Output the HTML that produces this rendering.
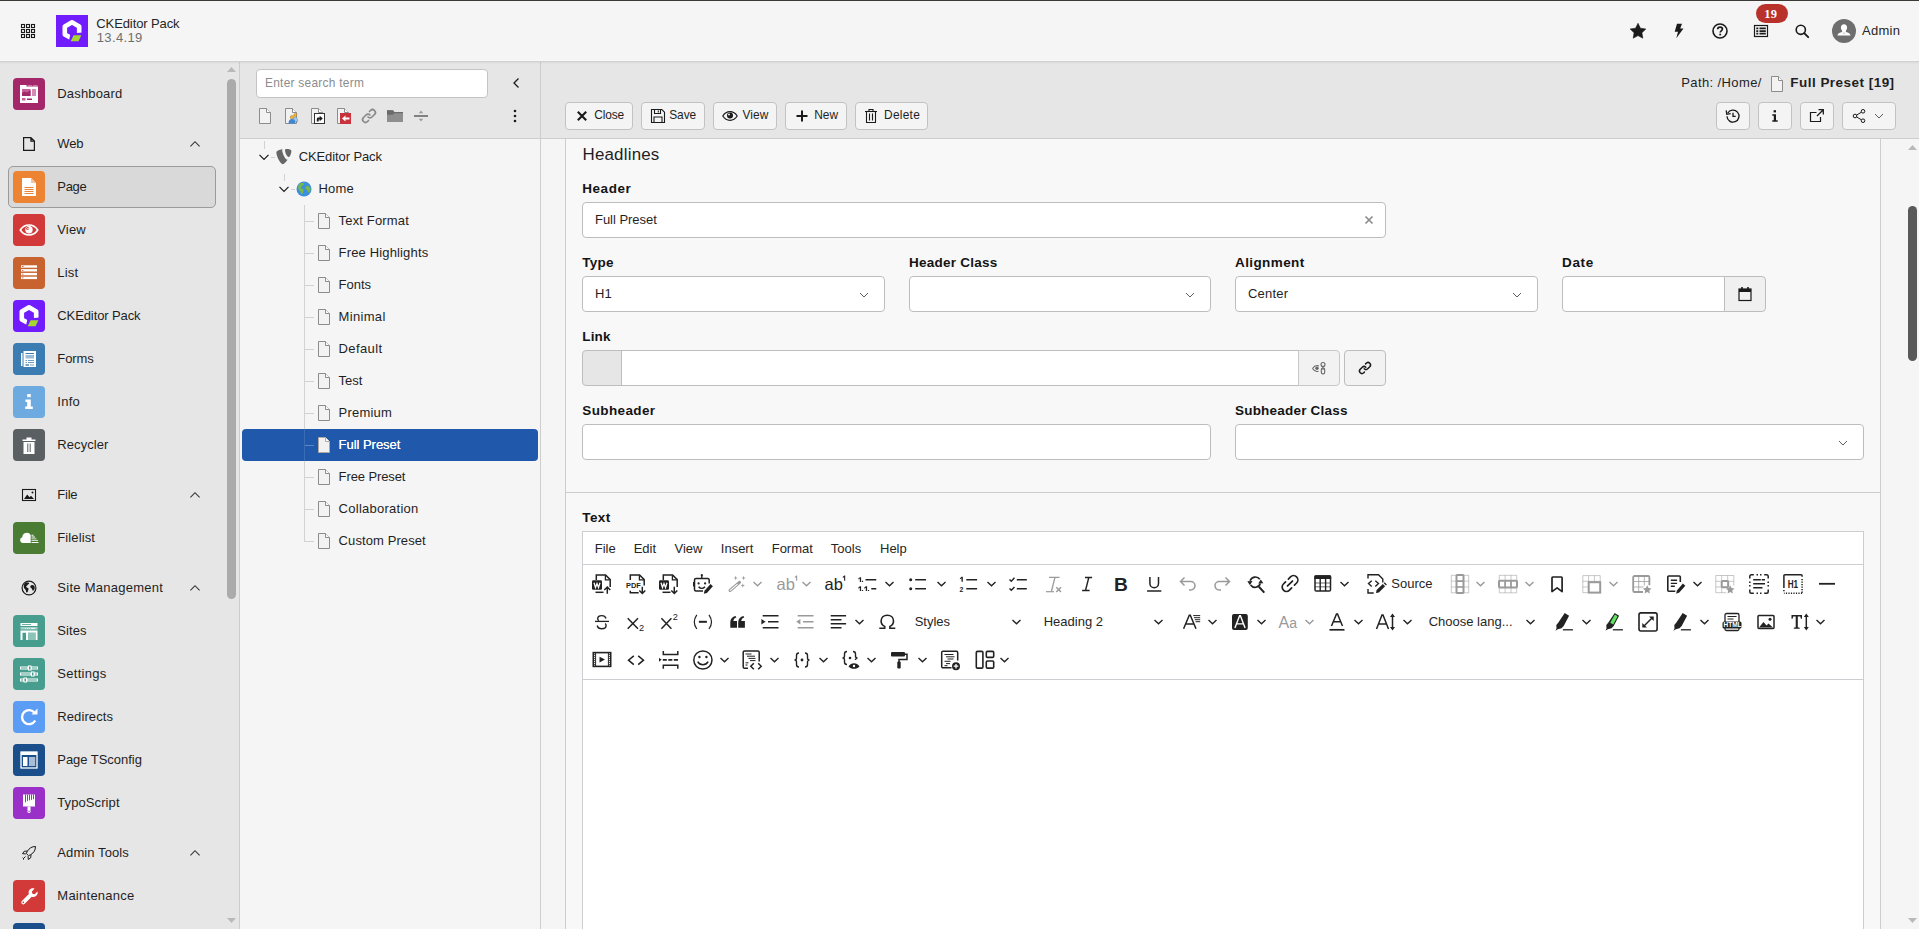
<!DOCTYPE html>
<html lang="en"><head><meta charset="utf-8"><title>Edit Page Content "Full Preset" - TYPO3 CMS</title><style>html,body{margin:0;padding:0}body{width:1919px;height:929px;overflow:hidden;position:relative;background:#f5f5f5;font-family:"Liberation Sans",sans-serif;-webkit-font-smoothing:antialiased}.b{position:absolute;box-sizing:border-box;display:block;overflow:visible}.t{position:absolute;white-space:nowrap;line-height:1;display:block}</style></head>
<body>
<div class="b" style="left:0px;top:0px;width:1919px;height:1px;background:#3b3a36"></div>
<div class="b" style="left:0px;top:1px;width:1919px;height:60px;background:#f5f5f5"></div>
<div class="b" style="left:0px;top:61px;width:1919px;height:868px;background:#f5f5f5"></div>
<div class="b" style="left:0px;top:60px;width:1919px;height:1px;background:#f8f8f8"></div>
<div class="b" style="left:0px;top:61px;width:1919px;height:1px;background:#d0d0d0"></div>
<div class="b" style="left:0px;top:62px;width:239px;height:867px;background:#e6e6e6"></div>
<div class="b" style="left:239px;top:62px;width:1px;height:867px;background:#cdcdcd"></div>
<div class="b" style="left:240px;top:62px;width:300px;height:76px;background:#e6e6e6"></div>
<div class="b" style="left:240px;top:138px;width:300px;height:1px;background:#cdcdcd"></div>
<div class="b" style="left:240px;top:139px;width:300px;height:790px;background:#f5f5f5"></div>
<div class="b" style="left:540px;top:62px;width:1px;height:867px;background:#cdcdcd"></div>
<div class="b" style="left:541px;top:62px;width:1378px;height:76px;background:#e6e6e6"></div>
<div class="b" style="left:541px;top:138px;width:1378px;height:1px;background:#cdcdcd"></div>
<div class="b" style="left:0px;top:62px;width:1919px;height:1px;background:rgba(0,0,0,.035)"></div>
<div class="b" style="left:0px;top:63px;width:1919px;height:1px;background:rgba(0,0,0,.015)"></div>
<div class="b" style="left:565px;top:139px;width:1316px;height:790px;background:#f8f8f8;border-left:1px solid #cdcdcd;border-right:1px solid #cdcdcd"></div>
<svg class="b" style="left:20px;top:23px;" width="16" height="16" viewBox="0 0 16 16"><rect x="1.5" y="1.5" width="3" height="3" fill="none" stroke="#1a1a1a" stroke-width="1.1"/><rect x="1.5" y="6.5" width="3" height="3" fill="none" stroke="#1a1a1a" stroke-width="1.1"/><rect x="1.5" y="11.5" width="3" height="3" fill="none" stroke="#1a1a1a" stroke-width="1.1"/><rect x="6.5" y="1.5" width="3" height="3" fill="none" stroke="#1a1a1a" stroke-width="1.1"/><rect x="6.5" y="6.5" width="3" height="3" fill="none" stroke="#1a1a1a" stroke-width="1.1"/><rect x="6.5" y="11.5" width="3" height="3" fill="none" stroke="#1a1a1a" stroke-width="1.1"/><rect x="11.5" y="1.5" width="3" height="3" fill="none" stroke="#1a1a1a" stroke-width="1.1"/><rect x="11.5" y="6.5" width="3" height="3" fill="none" stroke="#1a1a1a" stroke-width="1.1"/><rect x="11.5" y="11.5" width="3" height="3" fill="none" stroke="#1a1a1a" stroke-width="1.1"/></svg>
<svg class="b" style="left:56px;top:15px;" width="32" height="32" viewBox="0 0 32 32"><rect width="32" height="32" fill="#701cff"/><path d="M16 7.200l7.200 4.200v8l-7.200 4.200-7.200-4.200v-8z" fill="none" stroke="#fff" stroke-width="4.600" stroke-linejoin="round"/><path d="M27 17.500l-12.500 1-2 9.500h14.500z" fill="#701cff"/><path d="M17.600 20.300h7.800l-2.900 5.900h-7.800z" fill="#a5d72e"/></svg>
<span class="t" style="left:96.30px;top:16.80px;font-size:13.00px;letter-spacing:-0.104px;color:#262626;">CKEditor Pack</span>
<span class="t" style="left:96.80px;top:30.90px;font-size:13.00px;letter-spacing:0.347px;color:#6f6f6f;">13.4.19</span>
<svg class="b" style="left:1630px;top:23px;" width="16" height="16" viewBox="0 0 16 16"><path d="M8 .3l2.400 4.900 5.400.800-3.900 3.800.900 5.400-4.800-2.600-4.800 2.600.900-5.400-3.900-3.800 5.400-.800z" fill="#1a1a1a" stroke="#1a1a1a" stroke-width=".6" stroke-linejoin="round"/></svg>
<svg class="b" style="left:1671px;top:23px;" width="16" height="16" viewBox="0 0 16 16"><path d="M6 .8h5l-1.800 4.600h3.300l-7.200 9.800 1.700-6.400h-3.300z" fill="#1a1a1a"/></svg>
<svg class="b" style="left:1712px;top:23px;" width="16" height="16" viewBox="0 0 16 16"><circle cx="8" cy="8" r="7" fill="none" stroke="#1a1a1a" stroke-width="1.600"/><path d="M5.700 6.300c0-1.400 1-2.200 2.400-2.200s2.300.800 2.300 2c0 1.800-2.200 1.700-2.200 3.500" fill="none" stroke="#1a1a1a" stroke-width="1.700"/><rect x="7.300" y="10.700" width="1.800" height="1.700" fill="#1a1a1a"/></svg>
<svg class="b" style="left:1753px;top:23px;" width="16" height="16" viewBox="0 0 16 16"><rect x="1.500" y="2.500" width="13" height="11" fill="none" stroke="#1a1a1a" stroke-width="1.200"/><path d="M3.300 4.600h2v1.700h-2zM3.300 7.200h2v1.700h-2zM3.300 9.800h2v1.700h-2zM6.500 4.600h6.300v1.700h-6.300zM6.500 7.200h6.300v1.700h-6.300zM6.500 9.800h6.300v1.700h-6.300z" fill="#1a1a1a"/></svg>
<svg class="b" style="left:1794px;top:23px;" width="16" height="16" viewBox="0 0 16 16"><circle cx="6.800" cy="6.800" r="4.600" fill="none" stroke="#1a1a1a" stroke-width="1.6"/><path d="M10.200 10.200l4 4" stroke="#1a1a1a" stroke-width="1.900" stroke-linecap="round"/></svg>
<div class="b" style="left:1756px;top:4px;width:32px;height:19px;background:#b9312b;border-radius:10px"></div>
<span class="t" style="left:1764.3px;top:7.6px;font-size:12.5px;font-weight:700;color:#fff;font-family:'Liberation Serif',serif;letter-spacing:.2px">19</span>
<svg class="b" style="left:1832px;top:19px;" width="24" height="24" viewBox="0 0 24 24"><circle cx="12" cy="12" r="12" fill="#6e6e6e"/><path d="M12 5.200c1.900 0 3.100 1.400 3.100 3.300 0 1.300-.5 2.500-1.200 3.200v1.300c2.600.7 4.400 1.500 4.700 3.400h-13.200c.3-1.900 2.100-2.700 4.700-3.400v-1.300c-.7-.7-1.200-1.900-1.200-3.200 0-1.900 1.200-3.300 3.100-3.300z" fill="#fff"/><path d="M10.100 13.600l1.900 2.400 1.900-2.400" fill="#d9d9d9"/></svg>
<span class="t" style="left:1862.00px;top:24.00px;font-size:13.00px;letter-spacing:0.279px;color:#262626;">Admin</span>
<div class="b" style="left:8px;top:166px;width:208px;height:42px;background:#d9d9d9;border:1px solid #9b9b9b;border-radius:5px"></div>
<svg class="b" style="left:13px;top:78px;" width="32" height="32" viewBox="0 0 32 32"><rect width="32" height="32" rx="4" fill="#a4276a"/><path d="M7 7h6.500v1.500h11.500v16.500h-18z" fill="#fff"/><path d="M14.500 7.200h4.500v.9h-4.500zM20 7.200h4.500v.9h-4.500z" fill="#d993b8"/><path d="M9 11h8.500v7h-8.500z" fill="#c65f97"/><path d="M9 15l2.500-1.500 2.500 1 3.500-2.500v6h-8.500z" fill="#a4276a"/><path d="M19 11h4v7h-4z" fill="#d38bb3"/><path d="M9 20h3.500v2.500h-3.500z" fill="#c65f97"/><path d="M14 20.500h5v1.500h-5z" fill="#a4276a"/></svg>
<span class="t" style="left:57.30px;top:87.00px;font-size:13.00px;letter-spacing:0.167px;color:#1f1f1f;">Dashboard</span>
<svg class="b" style="left:21px;top:136px;" width="16" height="16" viewBox="0 0 16 16"><path d="M2.600 1.600h7.300l3.500 3.500v9.300h-10.800zM9.900 1.600v3.500h3.500" fill="none" stroke="#1a1a1a" stroke-width="1.200"/></svg>
<svg class="b" style="left:187px;top:136px;" width="16" height="16" viewBox="0 0 16 16"><path d="M3.400 10.300l4.600-4.600 4.600 4.600" fill="none" stroke="#333" stroke-width="1.100"/></svg>
<span class="t" style="left:57.30px;top:137.00px;font-size:13.00px;letter-spacing:-0.111px;color:#1f1f1f;">Web</span>
<svg class="b" style="left:13px;top:171px;" width="32" height="32" viewBox="0 0 32 32"><rect width="32" height="32" rx="4" fill="#ed8433"/><path d="M9 7h9l5 5v13h-14z" fill="#fff"/><path d="M18 7l5 5h-5z" fill="#f6c29b"/><path d="M11.500 16h9v1h-9zM11.500 18h9v1h-9zM11.500 20h9v1h-9zM11.500 22h9v1h-9z" fill="#ed8433"/></svg>
<span class="t" style="left:57.30px;top:180.00px;font-size:13.00px;letter-spacing:-0.328px;color:#1f1f1f;">Page</span>
<svg class="b" style="left:13px;top:214px;" width="32" height="32" viewBox="0 0 32 32"><rect width="32" height="32" rx="4" fill="#d13a38"/><path d="M7.300 16c2.100-3.300 5-5 8.700-5s6.600 1.700 8.700 5c-2.100 3.300-5 5-8.700 5s-6.600-1.700-8.700-5z" fill="none" stroke="#fff" stroke-width="1.700"/><circle cx="16" cy="15.700" r="3.700" fill="#fff"/><circle cx="14.600" cy="14.400" r="1.500" fill="#d13a38"/><circle cx="15" cy="14.700" r=".800" fill="#fff"/></svg>
<span class="t" style="left:57.30px;top:223.00px;font-size:13.00px;letter-spacing:0.134px;color:#1f1f1f;">View</span>
<svg class="b" style="left:13px;top:257px;" width="32" height="32" viewBox="0 0 32 32"><rect width="32" height="32" rx="4" fill="#c8622f"/><path d="M8 8.3h16v2.400h-16z" fill="#fff"/><path d="M9 9.1h1.500v.8h-1.500z" fill="#c8622f"/><path d="M8 12.1h16v2.400h-16z" fill="#fff"/><path d="M9 12.9h1.500v.8h-1.500z" fill="#c8622f"/><path d="M8 15.9h16v2.400h-16z" fill="#fff"/><path d="M9 16.7h1.500v.8h-1.500z" fill="#c8622f"/><path d="M8 19.7h16v2.400h-16z" fill="#fff"/><path d="M9 20.5h1.500v.8h-1.500z" fill="#c8622f"/></svg>
<span class="t" style="left:57.30px;top:266.00px;font-size:13.00px;letter-spacing:0.187px;color:#1f1f1f;">List</span>
<svg class="b" style="left:13px;top:300px;" width="32" height="32" viewBox="0 0 32 32"><rect width="32" height="32" rx="4" fill="#701cff"/><path d="M16 7.200l7.200 4.200v8l-7.200 4.200-7.200-4.200v-8z" fill="none" stroke="#fff" stroke-width="4.600" stroke-linejoin="round"/><path d="M27 17.500l-12.500 1-2 9.500h14.500z" fill="#701cff"/><path d="M17.600 20.300h7.800l-2.900 5.900h-7.800z" fill="#a5d72e"/></svg>
<span class="t" style="left:57.30px;top:309.00px;font-size:13.00px;letter-spacing:-0.104px;color:#1f1f1f;">CKEditor Pack</span>
<svg class="b" style="left:13px;top:343px;" width="32" height="32" viewBox="0 0 32 32"><rect width="32" height="32" rx="4" fill="#3b7db3"/><path d="M8 10h1.500v13h-1.500z" fill="#fff"/><path d="M10.500 8h12.500v16h-12.500z" fill="#fff"/><path d="M12.500 10h8.500v1h-8.500z" fill="#3b7db3"/><path d="M12.500 12h8.500v3.500h-8.500z" fill="#9bbdd8"/><path d="M12.500 17h1.500v1h-1.500zM15 17h6v1h-6zM12.500 19h1.500v1h-1.500zM15 19h6v1h-6z" fill="#6f9fc7"/><path d="M12.500 21.300h3.500v1.400h-3.500z" fill="#3b7db3"/><path d="M17 21.300h4v1.400h-4z" fill="#9bbdd8"/></svg>
<span class="t" style="left:57.30px;top:352.00px;font-size:13.00px;letter-spacing:-0.070px;color:#1f1f1f;">Forms</span>
<svg class="b" style="left:13px;top:386px;" width="32" height="32" viewBox="0 0 32 32"><rect width="32" height="32" rx="4" fill="#6daae0"/><rect x="14.200" y="8" width="3.600" height="3.200" fill="#fff"/><path d="M12.500 13.500h5.300v7h2v2.500h-7.600v-2.500h2v-4.500h-1.700z" fill="#fff"/></svg>
<span class="t" style="left:57.30px;top:395.00px;font-size:13.00px;letter-spacing:0.257px;color:#1f1f1f;">Info</span>
<svg class="b" style="left:13px;top:429px;" width="32" height="32" viewBox="0 0 32 32"><rect width="32" height="32" rx="4" fill="#5a5f62"/><path d="M9.500 10.500h13v1.500h-13zM13.500 8.500h5v2h-5z" fill="#fff"/><path d="M10.500 13h11v12h-11z" fill="#fff"/><path d="M14.300 14.500h1v8.500h-1zM16.700 14.500h1v8.500h-1z" fill="#5a5f62"/></svg>
<span class="t" style="left:57.30px;top:438.00px;font-size:13.00px;letter-spacing:0.070px;color:#1f1f1f;">Recycler</span>
<svg class="b" style="left:21px;top:487px;" width="16" height="16" viewBox="0 0 16 16"><rect x="1.500" y="2.500" width="13" height="11" fill="none" stroke="#1a1a1a" stroke-width="1.100"/><path d="M3 12l3.200-4.500 2.300 2.800 1.500-1.500 3 3.200z" fill="#1a1a1a"/><circle cx="11.500" cy="5.500" r="1" fill="#1a1a1a"/></svg>
<svg class="b" style="left:187px;top:487px;" width="16" height="16" viewBox="0 0 16 16"><path d="M3.400 10.300l4.600-4.600 4.600 4.600" fill="none" stroke="#333" stroke-width="1.100"/></svg>
<span class="t" style="left:57.30px;top:488.00px;font-size:13.00px;letter-spacing:-0.217px;color:#1f1f1f;">File</span>
<svg class="b" style="left:13px;top:522px;" width="32" height="32" viewBox="0 0 32 32"><rect width="32" height="32" rx="4" fill="#4a7c34"/><path d="M9.700 21a2.900 2.900 0 0 1-.4-5.700 4.500 4.500 0 0 1 8.400-2.300v8z" fill="#fff"/><path d="M18.500 12.800h2v.9h-2zM18.500 14.600h3.500v.9h-3.500zM18.500 16.400h5v.9h-5zM18.500 18.200h6.500v.9h-6.500zM18.500 20h7v.9h-7z" fill="#fff"/></svg>
<span class="t" style="left:57.30px;top:531.00px;font-size:13.00px;letter-spacing:0.109px;color:#1f1f1f;">Filelist</span>
<svg class="b" style="left:21px;top:580px;" width="16" height="16" viewBox="0 0 16 16"><circle cx="8" cy="8" r="6.900" fill="none" stroke="#1a1a1a" stroke-width="1.200"/><path d="M4.500 2.700c1.200-.5 2.400-.2 3.300.1.800.3.300 1.200-.400 1.400-.800.200-.700.900-1.300 1.200-.700.400-1.100 1.100-.700 1.800.4.700 1.500.4 2 1.100.4.600-.1 1.400-.300 2.300-.200 1-.500 2-1.300 1.900-.8-.1-.8-1.300-1-2.300-.200-.900-1.100-1.100-1.600-2-.400-.900-.700-2-.300-3 .2-.900.800-2 1.600-2.500zM10.300 5.200c.7-.4 2-.3 2.600.3.600.6 1.100 1.900.8 2.900-.300 1.100-1 2.300-1.800 2.200-.8-.1-.500-1.300-1-1.900-.5-.600-1.500-.800-1.600-1.700-.1-.700.400-1.400 1-1.800z" fill="#1a1a1a"/></svg>
<svg class="b" style="left:187px;top:580px;" width="16" height="16" viewBox="0 0 16 16"><path d="M3.400 10.300l4.600-4.600 4.600 4.600" fill="none" stroke="#333" stroke-width="1.100"/></svg>
<span class="t" style="left:57.30px;top:581.00px;font-size:13.00px;letter-spacing:0.267px;color:#1f1f1f;">Site Management</span>
<svg class="b" style="left:13px;top:615px;" width="32" height="32" viewBox="0 0 32 32"><rect width="32" height="32" rx="4" fill="#479e8f"/><path d="M7.500 8h17v3h-17z" fill="#fff"/><path d="M9 9h9v.8h-9z" fill="#479e8f"/><path d="M7.500 12h17v2.600h-17z" fill="#a3cfc7"/><path d="M12 13h1v.8h-1zM14 13h1v.8h-1zM16 13h1v.8h-1zM18 13h4v.8h-4z" fill="#fff"/><path d="M7.500 15.500h17v2.300h-17zM7.500 15.500h2v9.500h-2zM22.500 15.500h2v9.500h-2zM13 15.500h2v9.500h-2z" fill="#fff"/><path d="M15 17.800h7.500v7.200h-7.500z" fill="#8cc4ba"/></svg>
<span class="t" style="left:57.30px;top:624.00px;font-size:13.00px;letter-spacing:0.078px;color:#1f1f1f;">Sites</span>
<svg class="b" style="left:13px;top:658px;" width="32" height="32" viewBox="0 0 32 32"><rect width="32" height="32" rx="4" fill="#479e8f"/><g fill="none" stroke="#fff" stroke-width="1"><rect x="7.500" y="9" width="7.500" height="2"/><rect x="18.500" y="9" width="6" height="2"/><rect x="15.500" y="8" width="2.500" height="4"/><rect x="7.500" y="15" width="10.500" height="2"/><rect x="21.500" y="15" width="3" height="2"/><rect x="18.500" y="14" width="2.500" height="4"/><rect x="7.500" y="21" width="3" height="2"/><rect x="14" y="21" width="10.500" height="2"/><rect x="11" y="20" width="2.500" height="4"/></g></svg>
<span class="t" style="left:57.30px;top:667.00px;font-size:13.00px;letter-spacing:0.281px;color:#1f1f1f;">Settings</span>
<svg class="b" style="left:13px;top:701px;" width="32" height="32" viewBox="0 0 32 32"><rect width="32" height="32" rx="4" fill="#5b9cf5"/><path d="M22.200 19.500a7 7 0 1 1-.5-7.500" fill="none" stroke="#fff" stroke-width="2.400"/><path d="M18.500 13.500h6v-6z" fill="#fff"/></svg>
<span class="t" style="left:57.30px;top:710.00px;font-size:13.00px;letter-spacing:0.093px;color:#1f1f1f;">Redirects</span>
<svg class="b" style="left:13px;top:744px;" width="32" height="32" viewBox="0 0 32 32"><rect width="32" height="32" rx="4" fill="#1a4f8b"/><rect x="8" y="8" width="16" height="16" fill="none" stroke="#fff" stroke-width="1.300"/><path d="M8 8h16v3h-16z" fill="#fff"/><path d="M10 13h4.500v9h-4.500z" fill="#fff"/><path d="M16 13h6.200v9h-6.200z" fill="#a9bed6"/></svg>
<span class="t" style="left:57.30px;top:753.00px;font-size:13.00px;letter-spacing:-0.039px;color:#1f1f1f;">Page TSconfig</span>
<svg class="b" style="left:13px;top:787px;" width="32" height="32" viewBox="0 0 32 32"><rect width="32" height="32" rx="4" fill="#9b30c9"/><path d="M10 7.500h12v12h-12z" fill="#fff"/><path d="M12 7.500h1v7l-1 1.500zM14 7.500h1v6l-1 1zM16 7.500h1v5.500l-1 .8zM18 7.500h1v5l-1 .7zM20 7.500h1v4.500l-1 .6z" fill="#9b30c9"/><path d="M14.500 19.500h3v4h-3z" fill="#fff"/><circle cx="16" cy="24.500" r="1.600" fill="#fff"/><circle cx="16" cy="24.500" r=".7" fill="#9b30c9"/></svg>
<span class="t" style="left:57.30px;top:796.00px;font-size:13.00px;letter-spacing:0.091px;color:#1f1f1f;">TypoScript</span>
<svg class="b" style="left:21px;top:845px;" width="16" height="16" viewBox="0 0 16 16"><g fill="none" stroke="#1a1a1a" stroke-width="1"><path d="M14.500 1.500c-3.500 0-6.200 1.500-8.200 4.800l-1 2.200 2.200 2.200 2.200-1c3.300-2 4.800-4.700 4.800-8.200z"/><path d="M6.500 6l-3.300.3-1.700 2.400 3.300.2M10 9.500l-.3 3.300-2.400 1.700-.2-3.300"/><path d="M4.500 11.500l-2.500 2.500"/></g><path d="M1.500 12.500l1 1M2.800 14.800l-.8-.8" stroke="#1a1a1a" stroke-width=".8"/></svg>
<svg class="b" style="left:187px;top:845px;" width="16" height="16" viewBox="0 0 16 16"><path d="M3.400 10.300l4.600-4.600 4.600 4.600" fill="none" stroke="#333" stroke-width="1.100"/></svg>
<span class="t" style="left:57.30px;top:846.00px;font-size:13.00px;letter-spacing:0.095px;color:#1f1f1f;">Admin Tools</span>
<svg class="b" style="left:13px;top:880px;" width="32" height="32" viewBox="0 0 32 32"><rect width="32" height="32" rx="4" fill="#d13a38"/><path d="M24.500 11.500l-2.800 2.800-2.300-.6-.600-2.300 2.800-2.800c-2-.7-4.100-.1-5.200 1.400-.9 1.200-1 2.700-.5 4l-7 7c-.8.800-.8 2 0 2.800.800.800 2 .8 2.800 0l7-7c1.300.5 2.800.4 4-.5 1.500-1.100 2.400-2.900 1.800-4.800z" fill="#fff"/><circle cx="10.300" cy="22.300" r=".9" fill="#d13a38"/></svg>
<span class="t" style="left:57.30px;top:889.00px;font-size:13.00px;letter-spacing:0.258px;color:#1f1f1f;">Maintenance</span>
<svg class="b" style="left:13px;top:923px;" width="32" height="32" viewBox="0 0 32 32"><rect width="32" height="32" rx="4" fill="#1a4f8b"/></svg>
<div class="b" style="left:227px;top:79px;width:9px;height:520px;background:#ababab;border-radius:5px"></div>
<svg class="b" style="left:227px;top:67px;" width="9" height="5" viewBox="0 0 9 5"><path d="M0 5l4.500-5 4.500 5z" fill="#b9b9b9"/></svg>
<svg class="b" style="left:227px;top:918px;" width="9" height="5" viewBox="0 0 9 5"><path d="M0 0l4.500 5 4.500-5z" fill="#b9b9b9"/></svg>
<div class="b" style="left:256px;top:69px;width:232px;height:29px;background:#fff;border:1px solid #c4c4c4;border-radius:4px"></div>
<span class="t" style="left:265.00px;top:78.01px;font-size:11.92px;letter-spacing:0.263px;color:#8c8c8c;">Enter search term</span>
<svg class="b" style="left:508px;top:75px;" width="16" height="16" viewBox="0 0 16 16"><path d="M10.500 3.500l-4.500 4.500 4.500 4.500" fill="none" stroke="#1a1a1a" stroke-width="1.300"/></svg>
<svg class="b" style="left:257px;top:108px;" width="16" height="16" viewBox="0 0 16 16"><path d="M2.500 .5h7l4 4v11h-11z" fill="#f2f2f2" stroke="#8c8c8c" stroke-width="1"/><path d="M9.500 .5v4h4" fill="#fff" stroke="#8c8c8c" stroke-width="1"/></svg>
<svg class="b" style="left:283px;top:108px;" width="16" height="16" viewBox="0 0 16 16"><path d="M2.500 .5h7l4 4v11h-11z" fill="#f2f2f2" stroke="#8c8c8c" stroke-width="1"/><path d="M9.500 .5v4h4" fill="#fff" stroke="#8c8c8c" stroke-width="1"/><circle cx="12.300" cy="7" r="1.600" fill="#f5b335" stroke="#8a6a20" stroke-width=".4"/><path d="M9.800 13.500c0-2.700 1-4.300 2.500-4.300s2.500 1.600 2.500 4.300z" fill="#9cc7ee" stroke="#5a7fa3" stroke-width=".4"/><circle cx="9" cy="9.200" r="1.800" fill="#f5b335" stroke="#8a6a20" stroke-width=".4"/><path d="M5.500 15.500c0-2.900 1.400-4.400 3.500-4.400s3.500 1.500 3.500 4.400z" fill="#3f86d6"/></svg>
<svg class="b" style="left:309px;top:108px;" width="16" height="16" viewBox="0 0 16 16"><path d="M2.500 .5h7l4 4v11h-11z" fill="#f2f2f2" stroke="#8c8c8c" stroke-width="1"/><path d="M9.500 .5v4h4" fill="#fff" stroke="#8c8c8c" stroke-width="1"/><rect x="5.500" y="5.500" width="10" height="10" fill="#fff" stroke="#333" stroke-width="1"/><path d="M7.800 13.500v-2.300c0-1 .700-1.600 1.600-1.600h1.300v-1.800l3.100 2.700-3.100 2.700v-1.800h-1v2.100z" fill="#1a1a1a"/></svg>
<svg class="b" style="left:335px;top:108px;" width="16" height="16" viewBox="0 0 16 16"><path d="M2.500 .5h7l4 4v11h-11z" fill="#f2f2f2" stroke="#8c8c8c" stroke-width="1"/><path d="M9.500 .5v4h4" fill="#fff" stroke="#8c8c8c" stroke-width="1"/><rect x="5" y="5" width="11" height="11" fill="#c8323c"/><path d="M7 10.500l3.500-3v2h4v2h-4v2z" fill="#fff"/></svg>
<svg class="b" style="left:361px;top:108px;" width="16" height="16" viewBox="0 0 16 16"><g fill="none" stroke="#8a8a8a" stroke-width="1.700" stroke-linecap="round"><path d="M7 9a2.800 2.800 0 0 0 4 0l2.500-2.500a2.800 2.800 0 0 0-4-4l-1 1"/><path d="M9 7a2.800 2.800 0 0 0-4 0l-2.500 2.500a2.800 2.800 0 0 0 4 4l1-1"/></g></svg>
<svg class="b" style="left:387px;top:108px;" width="16" height="16" viewBox="0 0 16 16"><path d="M0 2.300h6l1.300 1.700h8.700v10h-16z" fill="#8e8e8e"/><path d="M0 2.300h6l1.300 1.700h8.700v1.200h-8.800l-1.200 1.500h-6z" fill="#6b6b6b"/></svg>
<svg class="b" style="left:413px;top:108px;" width="16" height="16" viewBox="0 0 16 16"><path d="M1 7.300h14v1.400h-14z" fill="#555"/><path d="M8 2.500l2.200 2.800h-4.400zM8 13.500l2.200-2.800h-4.400z" fill="#9a9a9a"/></svg>
<svg class="b" style="left:507px;top:108px;" width="16" height="16" viewBox="0 0 16 16"><circle cx="8" cy="3" r="1.300" fill="#1a1a1a"/><circle cx="8" cy="8" r="1.300" fill="#1a1a1a"/><circle cx="8" cy="13" r="1.300" fill="#1a1a1a"/></svg>
<div class="b" style="left:264px;top:141px;width:1px;height:8px;background:#d2d2d2"></div>
<div class="b" style="left:271px;top:157px;width:4px;height:1px;background:#d2d2d2"></div>
<div class="b" style="left:284px;top:174px;width:1px;height:7px;background:#d2d2d2"></div>
<div class="b" style="left:291px;top:189px;width:4px;height:1px;background:#d2d2d2"></div>
<div class="b" style="left:304px;top:205px;width:1px;height:337px;background:#d2d2d2"></div>
<div class="b" style="left:242px;top:429px;width:296px;height:32px;background:#2059ab;border-radius:4px"></div>
<div class="b" style="left:304px;top:429px;width:1px;height:32px;background:#3a6cb5"></div>
<svg class="b" style="left:256px;top:149px;" width="16" height="16" viewBox="0 0 16 16"><path d="M3.500 5.800l4.500 4.500 4.500-4.500" fill="none" stroke="#1a1a1a" stroke-width="1.200"/></svg>
<svg class="b" style="left:276px;top:149px;" width="16" height="16" viewBox="0 0 16 16"><g transform="translate(-.6 -.6) scale(1.080)"><path d="M11.400 10.300c-.2.100-.400.100-.600.100-1.800 0-4.500-6.300-4.500-8.400 0-.8.200-1 .400-1.300-2.100.3-4.700 1.100-5.500 2.100-.2.200-.300.600-.300 1.100 0 3.300 3.500 10.700 6 10.700 1.100 0 3-1.900 4.500-4.300z" fill="#666"/><path d="M10.300.600c2.300 0 4.500.4 4.500 1.700 0 2.600-1.700 5.800-2.500 5.800-1.500 0-3.400-4.200-3.400-6.300 0-1 .4-1.200 1.400-1.200z" fill="#666"/></g></svg>
<span class="t" style="left:298.70px;top:150.30px;font-size:13.00px;letter-spacing:-0.104px;color:#1f1f1f;">CKEditor Pack</span>
<svg class="b" style="left:276px;top:181px;" width="16" height="16" viewBox="0 0 16 16"><path d="M3.500 5.800l4.500 4.500 4.500-4.500" fill="none" stroke="#1a1a1a" stroke-width="1.200"/></svg>
<svg class="b" style="left:296px;top:181px;" width="16" height="16" viewBox="0 0 16 16"><circle cx="8" cy="8" r="7.500" fill="#3b8ee0"/><path d="M4.200 2.300c1.200-.6 2.800-.3 3.800 0 .9.300.3 1.300-.5 1.500-.900.200-.800 1-1.500 1.400-.800.400-1.300 1.200-.800 2 .500.800 1.700.500 2.300 1.300.500.700-.100 1.600-.300 2.600-.200 1.100-.600 2.300-1.500 2.200-.900-.100-.900-1.500-1.100-2.600-.200-1-1.300-1.300-1.800-2.300-.500-1-.800-2.300-.400-3.400.300-1 .900-2.200 1.800-2.700zM10.500 5.300c.8-.5 2.300-.4 3 .3.700.7 1.200 2.100.900 3.300-.3 1.200-1.100 2.600-2 2.500-.9-.1-.6-1.500-1.200-2.200-.600-.700-1.700-.900-1.800-1.900-.1-.800.400-1.600 1.100-2z" fill="#79b943"/></svg>
<span class="t" style="left:318.40px;top:182.30px;font-size:13.00px;letter-spacing:0.190px;color:#1f1f1f;">Home</span>
<div class="b" style="left:305px;top:221px;width:9px;height:1px;background:#d2d2d2"></div>
<svg class="b" style="left:316px;top:213px;" width="16" height="16" viewBox="0 0 16 16"><path d="M2.500 .5h7l4 4v11h-11z" fill="#f2f2f2" stroke="#8c8c8c" stroke-width="1"/><path d="M9.500 .5v4h4" fill="#fff" stroke="#8c8c8c" stroke-width="1"/></svg>
<span class="t" style="left:338.60px;top:214.30px;font-size:13.00px;letter-spacing:0.159px;color:#1f1f1f;">Text Format</span>
<div class="b" style="left:305px;top:253px;width:9px;height:1px;background:#d2d2d2"></div>
<svg class="b" style="left:316px;top:245px;" width="16" height="16" viewBox="0 0 16 16"><path d="M2.500 .5h7l4 4v11h-11z" fill="#f2f2f2" stroke="#8c8c8c" stroke-width="1"/><path d="M9.500 .5v4h4" fill="#fff" stroke="#8c8c8c" stroke-width="1"/></svg>
<span class="t" style="left:338.60px;top:246.30px;font-size:13.00px;letter-spacing:0.152px;color:#1f1f1f;">Free Highlights</span>
<div class="b" style="left:305px;top:285px;width:9px;height:1px;background:#d2d2d2"></div>
<svg class="b" style="left:316px;top:277px;" width="16" height="16" viewBox="0 0 16 16"><path d="M2.500 .5h7l4 4v11h-11z" fill="#f2f2f2" stroke="#8c8c8c" stroke-width="1"/><path d="M9.500 .5v4h4" fill="#fff" stroke="#8c8c8c" stroke-width="1"/></svg>
<span class="t" style="left:338.60px;top:278.30px;font-size:13.00px;letter-spacing:-0.027px;color:#1f1f1f;">Fonts</span>
<div class="b" style="left:305px;top:317px;width:9px;height:1px;background:#d2d2d2"></div>
<svg class="b" style="left:316px;top:309px;" width="16" height="16" viewBox="0 0 16 16"><path d="M2.500 .5h7l4 4v11h-11z" fill="#f2f2f2" stroke="#8c8c8c" stroke-width="1"/><path d="M9.500 .5v4h4" fill="#fff" stroke="#8c8c8c" stroke-width="1"/></svg>
<span class="t" style="left:338.60px;top:310.30px;font-size:13.00px;letter-spacing:0.317px;color:#1f1f1f;">Minimal</span>
<div class="b" style="left:305px;top:349px;width:9px;height:1px;background:#d2d2d2"></div>
<svg class="b" style="left:316px;top:341px;" width="16" height="16" viewBox="0 0 16 16"><path d="M2.500 .5h7l4 4v11h-11z" fill="#f2f2f2" stroke="#8c8c8c" stroke-width="1"/><path d="M9.500 .5v4h4" fill="#fff" stroke="#8c8c8c" stroke-width="1"/></svg>
<span class="t" style="left:338.60px;top:342.30px;font-size:13.00px;letter-spacing:0.379px;color:#1f1f1f;">Default</span>
<div class="b" style="left:305px;top:381px;width:9px;height:1px;background:#d2d2d2"></div>
<svg class="b" style="left:316px;top:373px;" width="16" height="16" viewBox="0 0 16 16"><path d="M2.500 .5h7l4 4v11h-11z" fill="#f2f2f2" stroke="#8c8c8c" stroke-width="1"/><path d="M9.500 .5v4h4" fill="#fff" stroke="#8c8c8c" stroke-width="1"/></svg>
<span class="t" style="left:338.60px;top:374.30px;font-size:13.00px;letter-spacing:-0.053px;color:#1f1f1f;">Test</span>
<div class="b" style="left:305px;top:413px;width:9px;height:1px;background:#d2d2d2"></div>
<svg class="b" style="left:316px;top:405px;" width="16" height="16" viewBox="0 0 16 16"><path d="M2.500 .5h7l4 4v11h-11z" fill="#f2f2f2" stroke="#8c8c8c" stroke-width="1"/><path d="M9.500 .5v4h4" fill="#fff" stroke="#8c8c8c" stroke-width="1"/></svg>
<span class="t" style="left:338.60px;top:406.30px;font-size:13.00px;letter-spacing:0.199px;color:#1f1f1f;">Premium</span>
<div class="b" style="left:305px;top:445px;width:9px;height:1px;background:#5d86c2"></div>
<svg class="b" style="left:316px;top:437px;" width="16" height="16" viewBox="0 0 16 16"><path d="M2.500 .5h7l4 4v11h-11z" fill="#f2f2f2" stroke="#b0a9a0" stroke-width="1"/><path d="M9.500 .5v4h4" fill="#fff" stroke="#b0a9a0" stroke-width="1"/></svg>
<span class="t" style="left:338.60px;top:438.30px;font-size:13.00px;letter-spacing:-0.034px;color:#fff;text-shadow:0 0 .6px #fff;">Full Preset</span>
<div class="b" style="left:305px;top:477px;width:9px;height:1px;background:#d2d2d2"></div>
<svg class="b" style="left:316px;top:469px;" width="16" height="16" viewBox="0 0 16 16"><path d="M2.500 .5h7l4 4v11h-11z" fill="#f2f2f2" stroke="#8c8c8c" stroke-width="1"/><path d="M9.500 .5v4h4" fill="#fff" stroke="#8c8c8c" stroke-width="1"/></svg>
<span class="t" style="left:338.60px;top:470.30px;font-size:13.00px;letter-spacing:-0.111px;color:#1f1f1f;">Free Preset</span>
<div class="b" style="left:305px;top:509px;width:9px;height:1px;background:#d2d2d2"></div>
<svg class="b" style="left:316px;top:501px;" width="16" height="16" viewBox="0 0 16 16"><path d="M2.500 .5h7l4 4v11h-11z" fill="#f2f2f2" stroke="#8c8c8c" stroke-width="1"/><path d="M9.500 .5v4h4" fill="#fff" stroke="#8c8c8c" stroke-width="1"/></svg>
<span class="t" style="left:338.60px;top:502.30px;font-size:13.00px;letter-spacing:0.259px;color:#1f1f1f;">Collaboration</span>
<div class="b" style="left:305px;top:541px;width:9px;height:1px;background:#d2d2d2"></div>
<svg class="b" style="left:316px;top:533px;" width="16" height="16" viewBox="0 0 16 16"><path d="M2.500 .5h7l4 4v11h-11z" fill="#f2f2f2" stroke="#8c8c8c" stroke-width="1"/><path d="M9.500 .5v4h4" fill="#fff" stroke="#8c8c8c" stroke-width="1"/></svg>
<span class="t" style="left:338.60px;top:534.30px;font-size:13.00px;letter-spacing:0.095px;color:#1f1f1f;">Custom Preset</span>
<div class="b" style="left:565px;top:102px;width:68px;height:28px;background:#f4f4f4;border:1px solid #c2c2c2;border-radius:4px"></div>
<svg class="b" style="left:574px;top:108px;" width="16" height="16" viewBox="0 0 16 16"><path d="M3.800 3.800l8.400 8.400M12.200 3.800l-8.400 8.400" stroke="#1a1a1a" stroke-width="2.100"/></svg>
<span class="t" style="left:594.20px;top:109.71px;font-size:11.92px;letter-spacing:-0.100px;color:#1f1f1f;">Close</span>
<div class="b" style="left:641px;top:102px;width:64px;height:28px;background:#f4f4f4;border:1px solid #c2c2c2;border-radius:4px"></div>
<svg class="b" style="left:650px;top:108px;" width="16" height="16" viewBox="0 0 16 16"><path d="M1.500 1.500h10.300l2.700 2.700v10.300h-13z" fill="none" stroke="#1a1a1a" stroke-width="1.100"/><path d="M4.500 1.500v4h6v-4M8.300 2.500v2" fill="none" stroke="#1a1a1a" stroke-width="1.100"/><path d="M4 14.500v-5.500h8v5.500" fill="none" stroke="#1a1a1a" stroke-width="1.100"/></svg>
<span class="t" style="left:669.20px;top:109.71px;font-size:11.92px;letter-spacing:-0.040px;color:#1f1f1f;">Save</span>
<div class="b" style="left:713px;top:102px;width:64px;height:28px;background:#f4f4f4;border:1px solid #c2c2c2;border-radius:4px"></div>
<svg class="b" style="left:722px;top:108px;" width="16" height="16" viewBox="0 0 16 16"><path d="M.8 8c1.800-2.900 4.300-4.300 7.200-4.300s5.400 1.400 7.200 4.300c-1.800 2.900-4.300 4.300-7.200 4.300s-5.400-1.400-7.200-4.300z" fill="none" stroke="#1a1a1a" stroke-width="1.200"/><circle cx="8" cy="7.600" r="3" fill="#1a1a1a"/><circle cx="7" cy="6.500" r="1" fill="#eee"/></svg>
<span class="t" style="left:742.50px;top:109.71px;font-size:11.92px;letter-spacing:0.122px;color:#1f1f1f;">View</span>
<div class="b" style="left:785px;top:102px;width:62px;height:28px;background:#f4f4f4;border:1px solid #c2c2c2;border-radius:4px"></div>
<svg class="b" style="left:794px;top:108px;" width="16" height="16" viewBox="0 0 16 16"><path d="M8 2.500v11M2.500 8h11" stroke="#1a1a1a" stroke-width="2"/></svg>
<span class="t" style="left:814.20px;top:109.71px;font-size:11.92px;letter-spacing:0.051px;color:#1f1f1f;">New</span>
<div class="b" style="left:855px;top:102px;width:73px;height:28px;background:#f4f4f4;border:1px solid #c2c2c2;border-radius:4px"></div>
<svg class="b" style="left:863px;top:108px;" width="16" height="16" viewBox="0 0 16 16"><path d="M2 3.500h12" stroke="#1a1a1a" stroke-width="1.100"/><path d="M6 3.300v-1.800h4v1.800" fill="none" stroke="#1a1a1a" stroke-width="1.100"/><path d="M3.500 3.500v11h9v-11" fill="none" stroke="#1a1a1a" stroke-width="1.100"/><path d="M6.500 5.500v7M9.500 5.500v7" stroke="#1a1a1a" stroke-width="1.100"/></svg>
<span class="t" style="left:884.00px;top:109.71px;font-size:11.92px;letter-spacing:0.283px;color:#1f1f1f;">Delete</span>
<div class="b" style="left:1716px;top:102px;width:34px;height:28px;background:#f4f4f4;border:1px solid #c2c2c2;border-radius:4px"></div>
<div class="b" style="left:1758px;top:102px;width:34px;height:28px;background:#f4f4f4;border:1px solid #c2c2c2;border-radius:4px"></div>
<div class="b" style="left:1800px;top:102px;width:34px;height:28px;background:#f4f4f4;border:1px solid #c2c2c2;border-radius:4px"></div>
<div class="b" style="left:1842px;top:102px;width:54px;height:28px;background:#f4f4f4;border:1px solid #c2c2c2;border-radius:4px"></div>
<svg class="b" style="left:1725px;top:108px;" width="16" height="16" viewBox="0 0 16 16"><path d="M2.700 5.300a6 6 0 1 1-.7 2.900" fill="none" stroke="#1a1a1a" stroke-width="1.300"/><path d="M1.200 2.400l.6 3.900 3.900-.6" fill="none" stroke="#1a1a1a" stroke-width="1.300"/><path d="M8 4.800v3.500h2.700" fill="none" stroke="#1a1a1a" stroke-width="1.300"/></svg>
<svg class="b" style="left:1767px;top:108px;" width="16" height="16" viewBox="0 0 16 16"><rect x="6.600" y="2.200" width="2.400" height="2.200" fill="#1a1a1a"/><path d="M5.300 6.300h3.700v6h1.700v1.500h-5.400v-1.500h1.500v-4.500h-1.500z" fill="#1a1a1a"/></svg>
<svg class="b" style="left:1809px;top:108px;" width="16" height="16" viewBox="0 0 16 16"><path d="M11.500 9v4.500h-10v-9h6" fill="none" stroke="#1a1a1a" stroke-width="1.200"/><path d="M9.500 1.700h4.800v4.800M14.300 1.700l-6.300 6.300" fill="none" stroke="#1a1a1a" stroke-width="1.300"/></svg>
<svg class="b" style="left:1851px;top:108px;" width="16" height="16" viewBox="0 0 16 16"><circle cx="12" cy="3.300" r="1.800" fill="none" stroke="#1a1a1a" stroke-width="1"/><circle cx="4" cy="8" r="1.800" fill="none" stroke="#1a1a1a" stroke-width="1"/><circle cx="12" cy="12.700" r="1.800" fill="none" stroke="#1a1a1a" stroke-width="1"/><path d="M5.600 7.100l4.800-2.900M5.600 8.900l4.800 2.900" stroke="#1a1a1a" stroke-width="1"/></svg>
<svg class="b" style="left:1871px;top:108px;" width="16" height="16" viewBox="0 0 16 16"><path d="M4 6l4 4 4-4" fill="none" stroke="#5e5e5e" stroke-width="1"/></svg>
<span class="t" style="left:1681.30px;top:76.00px;font-size:13.00px;letter-spacing:0.386px;color:#1f1f1f;">Path: /Home/</span>
<svg class="b" style="left:1769px;top:76px;" width="16" height="16" viewBox="0 0 16 16"><path d="M2.500 .5h7l4 4v11h-11z" fill="#f2f2f2" stroke="#8c8c8c" stroke-width="1"/><path d="M9.500 .5v4h4" fill="#fff" stroke="#8c8c8c" stroke-width="1"/></svg>
<span class="t" style="left:1790.30px;top:75.57px;font-size:13.50px;letter-spacing:0.468px;color:#1f1f1f;font-weight:700;">Full Preset [19]</span>
<span class="t" style="left:582.50px;top:146.69px;font-size:16.90px;letter-spacing:0.212px;color:#1f1f1f;">Headlines</span>
<span class="t" style="left:582.30px;top:181.57px;font-size:13.50px;letter-spacing:0.525px;color:#141414;font-weight:700;">Header</span>
<div class="b" style="left:582px;top:202px;width:804px;height:36px;background:#fff;border:1px solid #bdbdbd;border-radius:4px"></div>
<span class="t" style="left:595.00px;top:213.00px;font-size:13.00px;letter-spacing:-0.034px;color:#1f1f1f;">Full Preset</span>
<svg class="b" style="left:1361px;top:212px;" width="16" height="16" viewBox="0 0 16 16"><path d="M4.500 4.500l7 7M11.500 4.500l-7 7" stroke="#8c8c8c" stroke-width="1.700"/></svg>
<span class="t" style="left:582.30px;top:256.07px;font-size:13.50px;letter-spacing:0.201px;color:#141414;font-weight:700;">Type</span>
<span class="t" style="left:909.00px;top:256.07px;font-size:13.50px;letter-spacing:0.238px;color:#141414;font-weight:700;">Header Class</span>
<span class="t" style="left:1235.00px;top:256.07px;font-size:13.50px;letter-spacing:0.397px;color:#141414;font-weight:700;">Alignment</span>
<span class="t" style="left:1562.00px;top:256.07px;font-size:13.50px;letter-spacing:0.668px;color:#141414;font-weight:700;">Date</span>
<div class="b" style="left:582px;top:276px;width:303px;height:36px;background:#fff;border:1px solid #bdbdbd;border-radius:4px"></div>
<span class="t" style="left:595.00px;top:287.00px;font-size:13.00px;letter-spacing:0.020px;color:#1f1f1f;">H1</span>
<svg class="b" style="left:856px;top:286.5px;" width="16" height="16" viewBox="0 0 16 16"><path d="M4 6l4 4 4-4" fill="none" stroke="#5e5e5e" stroke-width="1"/></svg>
<div class="b" style="left:909px;top:276px;width:302px;height:36px;background:#fff;border:1px solid #bdbdbd;border-radius:4px"></div>
<svg class="b" style="left:1182px;top:286.5px;" width="16" height="16" viewBox="0 0 16 16"><path d="M4 6l4 4 4-4" fill="none" stroke="#5e5e5e" stroke-width="1"/></svg>
<div class="b" style="left:1235px;top:276px;width:303px;height:36px;background:#fff;border:1px solid #bdbdbd;border-radius:4px"></div>
<span class="t" style="left:1248.00px;top:287.00px;font-size:13.00px;letter-spacing:0.228px;color:#1f1f1f;">Center</span>
<svg class="b" style="left:1509px;top:286.5px;" width="16" height="16" viewBox="0 0 16 16"><path d="M4 6l4 4 4-4" fill="none" stroke="#5e5e5e" stroke-width="1"/></svg>
<div class="b" style="left:1562px;top:276px;width:163px;height:36px;background:#fff;border:1px solid #bdbdbd;border-radius:4px;border-radius:4px 0 0 4px"></div>
<div class="b" style="left:1724px;top:276px;width:42px;height:36px;background:#f0f0f0;border:1px solid #bdbdbd;border-radius:0 4px 4px 0"></div>
<svg class="b" style="left:1737px;top:286px;" width="16" height="16" viewBox="0 0 16 16"><rect x="2" y="3" width="12" height="11.500" fill="none" stroke="#1a1a1a" stroke-width="1.200"/><path d="M2 3h12v3h-12z" fill="#1a1a1a"/><path d="M5 1v3M11 1v3" stroke="#1a1a1a" stroke-width="1.600"/></svg>
<span class="t" style="left:582.30px;top:329.87px;font-size:13.50px;letter-spacing:0.133px;color:#141414;font-weight:700;">Link</span>
<div class="b" style="left:582px;top:350px;width:40px;height:36px;background:#e6e6e6;border:1px solid #bdbdbd;border-radius:4px 0 0 4px"></div>
<div class="b" style="left:621px;top:350px;width:678px;height:36px;background:#fff;border:1px solid #bdbdbd"></div>
<div class="b" style="left:1298px;top:350px;width:42px;height:36px;background:#f2f2f2;border:1px solid #c8c8c8;border-radius:0 4px 4px 0"></div>
<svg class="b" style="left:1311px;top:360px;" width="16" height="16" viewBox="0 0 16 16"><g fill="none" stroke="#666" stroke-width="1.100"><path d="M1.500 8.500c1.300-2 2.900-3 4.500-3 .7 0 1.400.2 2 .5M1.500 8.500c1.300 2 2.900 3 4.500 3 .5 0 1-.1 1.500-.3"/><circle cx="12" cy="4.500" r="2"/><rect x="10.300" y="8" width="3.400" height="6" rx="1.700"/><path d="M12 6.500v3.500"/></g><circle cx="6" cy="8.300" r="1.700" fill="#666"/></svg>
<div class="b" style="left:1344px;top:350px;width:42px;height:36px;background:#f2f2f2;border:1px solid #bdbdbd;border-radius:4px"></div>
<svg class="b" style="left:1357px;top:360px;" width="16" height="16" viewBox="0 0 16 16"><g fill="none" stroke="#1a1a1a" stroke-width="1.500" stroke-linecap="round"><path d="M7.200 8.800a2.500 2.500 0 0 0 3.500 0l2.300-2.300a2.500 2.500 0 0 0-3.500-3.500l-.9.900"/><path d="M8.800 7.200a2.500 2.500 0 0 0-3.500 0l-2.300 2.300a2.500 2.500 0 0 0 3.500 3.500l.9-.9"/></g></svg>
<span class="t" style="left:582.30px;top:403.87px;font-size:13.50px;letter-spacing:0.382px;color:#141414;font-weight:700;">Subheader</span>
<span class="t" style="left:1235.00px;top:403.87px;font-size:13.50px;letter-spacing:0.209px;color:#141414;font-weight:700;">Subheader Class</span>
<div class="b" style="left:582px;top:424px;width:629px;height:36px;background:#fff;border:1px solid #bdbdbd;border-radius:4px"></div>
<div class="b" style="left:1235px;top:424px;width:629px;height:36px;background:#fff;border:1px solid #bdbdbd;border-radius:4px"></div>
<svg class="b" style="left:1835px;top:434.5px;" width="16" height="16" viewBox="0 0 16 16"><path d="M4 6l4 4 4-4" fill="none" stroke="#5e5e5e" stroke-width="1"/></svg>
<div class="b" style="left:566px;top:492px;width:1314px;height:1px;background:#cdcdcd"></div>
<span class="t" style="left:582.30px;top:510.57px;font-size:13.50px;letter-spacing:0.363px;color:#141414;font-weight:700;">Text</span>
<div class="b" style="left:582px;top:531px;width:1282px;height:420px;background:#fff;border:1px solid #ccced1"></div>
<div class="b" style="left:583px;top:564px;width:1280px;height:1px;background:#ccced1"></div>
<div class="b" style="left:583px;top:679px;width:1280px;height:1px;background:#ccced1"></div>
<span class="t" style="left:594.70px;top:541.70px;font-size:13.00px;color:#262626;">File</span>
<span class="t" style="left:633.70px;top:541.70px;font-size:13.00px;color:#262626;">Edit</span>
<span class="t" style="left:674.50px;top:541.70px;font-size:13.00px;color:#262626;">View</span>
<span class="t" style="left:720.80px;top:541.70px;font-size:13.00px;color:#262626;">Insert</span>
<span class="t" style="left:771.70px;top:541.70px;font-size:13.00px;color:#262626;">Format</span>
<span class="t" style="left:830.80px;top:541.70px;font-size:13.00px;color:#262626;">Tools</span>
<span class="t" style="left:880.00px;top:541.70px;font-size:13.00px;color:#262626;">Help</span>
<svg class="b" style="left:591.7px;top:574px;color:#222;" width="20" height="20" viewBox="0 0 20 20"><path d="M4.300 6v-5h9.300l4.600 4.600v7.400" fill="none" stroke="currentColor" stroke-width="1.500"/><path d="M13.400 1.200v4.600h4.600" fill="none" stroke="currentColor" stroke-width="1.300"/><rect x="0" y="6.300" width="10" height="9.400" rx="1.300" fill="currentColor"/><path d="M2 8.700l1.500 4.800 1.500-3.900 1.500 3.900 1.500-4.800" fill="none" stroke="#fff" stroke-width="1.300"/><path d="M3.500 18.300h8" fill="none" stroke="currentColor" stroke-width="1.500"/><path d="M15.300 19.800v-6.500M12.300 16l3-3 3 3" fill="none" stroke="currentColor" stroke-width="1.500"/></svg>
<svg class="b" style="left:625.8px;top:574px;color:#222;" width="20" height="20" viewBox="0 0 20 20"><path d="M4.300 6v-5h9.300l4.600 4.600v6" fill="none" stroke="currentColor" stroke-width="1.500"/><path d="M13.400 1.200v4.600h4.600" fill="none" stroke="currentColor" stroke-width="1.300"/><text x="0" y="13.900" font-size="7.400" font-weight="700" style="font-family:'Liberation Sans',sans-serif" fill="currentColor">PDF</text><path d="M4.300 16.800v2h8.400" fill="none" stroke="currentColor" stroke-width="1.500"/><path d="M16.300 12.800v6.500M13.300 16.500l3 3 3-3" fill="none" stroke="currentColor" stroke-width="1.500"/></svg>
<svg class="b" style="left:658.7px;top:574px;color:#222;" width="20" height="20" viewBox="0 0 20 20"><path d="M4.300 6v-5h9.300l4.600 4.600v7.400" fill="none" stroke="currentColor" stroke-width="1.500"/><path d="M13.400 1.200v4.600h4.600" fill="none" stroke="currentColor" stroke-width="1.300"/><rect x="0" y="6.300" width="10" height="9.400" rx="1.300" fill="currentColor"/><path d="M2 8.700l1.500 4.800 1.500-3.900 1.500 3.900 1.500-4.800" fill="none" stroke="#fff" stroke-width="1.300"/><path d="M3.500 18.300h8" fill="none" stroke="currentColor" stroke-width="1.500"/><path d="M15.300 12.800v6.500M12.300 16.500l3 3 3-3" fill="none" stroke="currentColor" stroke-width="1.500"/></svg>
<svg class="b" style="left:693px;top:574px;color:#222;" width="20" height="20" viewBox="0 0 20 20"><path d="M8.800 1v3.500" fill="none" stroke="currentColor" stroke-width="1.400"/><circle cx="8.800" cy="1.200" r="1.100" fill="currentColor"/><path d="M16.200 9.500v-3.500a1.500 1.500 0 0 0-1.500-1.500h-11.700a1.500 1.500 0 0 0-1.500 1.500v9.500a1.500 1.500 0 0 0 1.500 1.500h7" fill="none" stroke="currentColor" stroke-width="1.500"/><path d="M.6 8v4.500" fill="none" stroke="currentColor" stroke-width="1.200"/><circle cx="5.600" cy="9.400" r="1.100" fill="currentColor"/><circle cx="12.100" cy="9.400" r="1.100" fill="currentColor"/><path d="M5.600 12.800c.9 1.100 1.900 1.600 3.200 1.600s2.300-.5 3.200-1.600" fill="none" stroke="currentColor" stroke-width="1.400"/><path d="M10.800 19.800l.7-3.100 6-6.700 2.400 2.200-6 6.700z" fill="currentColor"/></svg>
<svg class="b" style="left:727.5px;top:574px;color:#9a9a9a;" width="20" height="20" viewBox="0 0 20 20"><path d="M2 16.500l9.500-8.200" fill="none" stroke="currentColor" stroke-width="3" stroke-linecap="round"/><path d="M2.200 16.300l7-6" stroke="#fff" stroke-width="1.100" stroke-linecap="round"/><path d="M7.700 1.800l.6 1.600 1.600.6-1.600.6-.6 1.600-.6-1.600-1.600-.6 1.600-.6zM15.600 1.800l.6 1.600 1.600.6-1.600.6-.6 1.600-.6-1.600-1.600-.6 1.600-.6zM14.800 9.300l.6 1.600 1.600.6-1.600.6-.6 1.600-.6-1.600-1.600-.6 1.600-.6z" fill="currentColor"/></svg>
<svg class="b" style="left:753px;top:581.2px;color:#9a9a9a;" width="9" height="6" viewBox="0 0 9 6"><path d="M.5 1l4 3.800 4-3.800" fill="none" stroke="currentColor" stroke-width="1.400"/></svg>
<svg class="b" style="left:776.7px;top:574px;color:#9a9a9a;" width="20" height="20" viewBox="0 0 20 20"><text x="-.5" y="16.300" font-size="16.500" style="font-family:'Liberation Sans',sans-serif" fill="currentColor">ab</text><path d="M17.600 3l1.700-1.500h.9v5.200h-1.100v-3.700l-1 .9z" fill="currentColor"/></svg>
<svg class="b" style="left:802px;top:581.2px;color:#9a9a9a;" width="9" height="6" viewBox="0 0 9 6"><path d="M.5 1l4 3.800 4-3.800" fill="none" stroke="currentColor" stroke-width="1.400"/></svg>
<svg class="b" style="left:824.6px;top:574px;color:#222;" width="20" height="20" viewBox="0 0 20 20"><text x="-.5" y="16.300" font-size="16.500" style="font-family:'Liberation Sans',sans-serif" fill="currentColor">ab</text><path d="M17.600 3l1.700-1.500h.9v5.200h-1.100v-3.700l-1 .9z" fill="currentColor"/></svg>
<svg class="b" style="left:856.7px;top:574px;color:#222;" width="20" height="20" viewBox="0 0 20 20"><path d="M1.3 4.5l1.6 -1.3h1.2v4.8h-1.3v-3.4l-1.5 1zM4.9 6.8h1.200v1.200h-1.200zM1.3 13.6l1.6 -1.3h1.2v4.8h-1.3v-3.4l-1.5 1zM4.9 15.9h1.200v1.200h-1.200zM7.3 13.6l1.6 -1.3h1.2v4.8h-1.3v-3.4l-1.5 1zM10.9 15.9h1.200v1.200h-1.200z" fill="currentColor"/><path d="M8.500 5.700h10.800M14.300 14.800h5" fill="none" stroke="currentColor" stroke-width="1.500"/></svg>
<svg class="b" style="left:885.4px;top:581.2px;color:#222;" width="9" height="6" viewBox="0 0 9 6"><path d="M.5 1l4 3.800 4-3.800" fill="none" stroke="currentColor" stroke-width="1.400"/></svg>
<svg class="b" style="left:907px;top:574px;color:#222;" width="20" height="20" viewBox="0 0 20 20"><circle cx="3.700" cy="5.700" r="1.500" fill="currentColor"/><circle cx="3.700" cy="14.800" r="1.500" fill="currentColor"/><path d="M8.200 5.700h10.800M8.200 14.800h10.800" fill="none" stroke="currentColor" stroke-width="1.500"/></svg>
<svg class="b" style="left:937px;top:581.2px;color:#222;" width="9" height="6" viewBox="0 0 9 6"><path d="M.5 1l4 3.800 4-3.800" fill="none" stroke="currentColor" stroke-width="1.400"/></svg>
<svg class="b" style="left:957.7px;top:574px;color:#222;" width="20" height="20" viewBox="0 0 20 20"><path d="M1.9 4.15417l1.66667 -1.35417h1.25v5h-1.35417v-3.54167l-1.5625 1.04167z" fill="currentColor"/><text x="1.500" y="17.800" font-size="6.800" font-weight="700" style="font-family:'Liberation Sans',sans-serif" fill="currentColor">2</text><path d="M8.300 5.700h10.800M8.300 14.800h10.800" fill="none" stroke="currentColor" stroke-width="1.500"/></svg>
<svg class="b" style="left:987px;top:581.2px;color:#222;" width="9" height="6" viewBox="0 0 9 6"><path d="M.5 1l4 3.800 4-3.800" fill="none" stroke="currentColor" stroke-width="1.400"/></svg>
<svg class="b" style="left:1008px;top:574px;color:#222;" width="20" height="20" viewBox="0 0 20 20"><path d="M1.500 5.500l1.800 1.700 3.200-3.400M1.500 14.600l1.800 1.700 3.200-3.400" fill="none" stroke="currentColor" stroke-width="1.400"/><path d="M8.800 5.700h10M8.800 14.800h10" fill="none" stroke="currentColor" stroke-width="1.500"/></svg>
<svg class="b" style="left:1043px;top:574px;color:#9a9a9a;" width="20" height="20" viewBox="0 0 20 20"><path d="M6 3.300h10.500M12 3.300l-3.500 13.700" fill="none" stroke="currentColor" stroke-width="1.300"/><path d="M3 17.700h8" fill="none" stroke="currentColor" stroke-width="1.200"/><path d="M13.300 13.300l4.700 4.700M18 13.300l-4.700 4.700" fill="none" stroke="currentColor" stroke-width="1.500"/></svg>
<svg class="b" style="left:1076.7px;top:574px;color:#222;" width="20" height="20" viewBox="0 0 20 20"><path d="M8 3.500h7.100M5.100 16.500h7.500M11.800 3.500l-3.300 13" fill="none" stroke="currentColor" stroke-width="1.400"/></svg>
<svg class="b" style="left:1110.7px;top:574px;color:#222;" width="20" height="20" viewBox="0 0 20 20"><text x="3.100" y="16.900" font-size="19.200" font-weight="700" style="font-family:'Liberation Sans',sans-serif" fill="currentColor">B</text></svg>
<svg class="b" style="left:1143.7px;top:574px;color:#222;" width="20" height="20" viewBox="0 0 20 20"><path d="M5.900 3v6.500a4.300 4.300 0 0 0 8.600 0v-6.500" fill="none" stroke="currentColor" stroke-width="1.500"/><path d="M3.100 17h14.200" fill="none" stroke="currentColor" stroke-width="1.500"/></svg>
<svg class="b" style="left:1178px;top:574px;color:#9a9a9a;" width="20" height="20" viewBox="0 0 20 20"><path d="M6.500 5l-4 4 4 4M2.800 9h10a4.200 4.200 0 0 1 0 8.400h-1.800" fill="none" stroke="currentColor" stroke-width="1.500" transform="translate(0 -1.500)"/></svg>
<svg class="b" style="left:1212px;top:574px;color:#9a9a9a;" width="20" height="20" viewBox="0 0 20 20"><path d="M13.500 5l4 4-4 4M17.200 9h-10a4.200 4.200 0 0 0 0 8.400h1.800" fill="none" stroke="currentColor" stroke-width="1.500" transform="translate(0 -1.500)"/></svg>
<svg class="b" style="left:1246px;top:574px;color:#222;" width="20" height="20" viewBox="0 0 20 20"><path d="M13.800 5.300a5.500 5.500 0 0 0-9.700 1.500M4.600 11a5.500 5.500 0 0 0 9.700-1.500" fill="none" stroke="currentColor" stroke-width="1.700"/><path d="M12.900 12.700l5.400 5.900" fill="none" stroke="currentColor" stroke-width="2"/><path d="M1.300 7.300l5.200-.3-2.600 4.200z" fill="currentColor"/><path d="M17.400 9.300l-5.200.3 2.600-4.200z" fill="currentColor"/></svg>
<svg class="b" style="left:1280px;top:574px;color:#222;" width="20" height="20" viewBox="0 0 20 20"><g transform="rotate(-45 10 9.500)" fill="none" stroke="currentColor" stroke-width="1.700" stroke-linecap="round"><path d="M8 5.200h-3a4.300 4.300 0 0 0 0 8.600h3M12 5.200h3a4.300 4.300 0 0 1 0 8.600h-3M6.500 9.500h7"/></g></svg>
<svg class="b" style="left:1313px;top:574px;color:#222;" width="20" height="20" viewBox="0 0 20 20"><rect x="2" y="2" width="15.500" height="15" rx="1.300" fill="none" stroke="currentColor" stroke-width="1.500"/><path d="M1.300 2.600a1.300 1.300 0 0 1 1.300-1.300h14.300a1.300 1.300 0 0 1 1.300 1.300v2.300h-16.900z" fill="currentColor"/><path d="M7.200 4.500v12.500M12.600 4.500v12.500" fill="none" stroke="currentColor" stroke-width="1.400"/><path d="M2 9h15.500M2 12.800h15.500" fill="none" stroke="currentColor" stroke-width="1.500" opacity=".45"/></svg>
<svg class="b" style="left:1340px;top:581.2px;color:#222;" width="9" height="6" viewBox="0 0 9 6"><path d="M.5 1l4 3.800 4-3.800" fill="none" stroke="currentColor" stroke-width="1.400"/></svg>
<svg class="b" style="left:1366px;top:574px;color:#222;" width="20" height="20" viewBox="0 0 20 20"><path d="M2 4.500v-3.700h10.500l4.300 4.300v3.500" fill="none" stroke="currentColor" stroke-width="1.400"/><path d="M2 15v4h5.700" fill="none" stroke="currentColor" stroke-width="1.400"/><path d="M5.700 6.700l-3.200 2.900 3.200 2.900M9.300 6.700l3.200 2.900-3.200 2.900" fill="none" stroke="currentColor" stroke-width="1.400"/><path d="M10 19l.6-2.900 6.200-6.200 2.300 2.300-6.200 6.200z" fill="currentColor"/><path d="M17.700 9.200l.9-.9 2.300 2.300-.9.900z" fill="currentColor"/></svg>
<svg class="b" style="left:1450px;top:574px;color:#9a9a9a;" width="20" height="20" viewBox="0 0 20 20"><path d="M1.300 1.300h17.400v17.500h-17.400zM1.300 7.100h17.400M1.300 13h17.400" fill="none" stroke="currentColor" stroke-width="1" opacity=".55"/><rect x="6.500" y="1" width="7" height="18" rx=".8" fill="none" stroke="currentColor" stroke-width="2"/><path d="M6.500 7.100h7M6.500 13h7" fill="none" stroke="currentColor" stroke-width="1.700"/></svg>
<svg class="b" style="left:1476px;top:581.2px;color:#9a9a9a;" width="9" height="6" viewBox="0 0 9 6"><path d="M.5 1l4 3.800 4-3.800" fill="none" stroke="currentColor" stroke-width="1.400"/></svg>
<svg class="b" style="left:1498px;top:574px;color:#9a9a9a;" width="20" height="20" viewBox="0 0 20 20"><path d="M1.300 1.300h17.400v17.500h-17.400zM7.100 1.300v17.500M13 1.300v17.500" fill="none" stroke="currentColor" stroke-width="1" opacity=".55"/><rect x="1" y="6.800" width="18" height="6.600" rx=".8" fill="none" stroke="currentColor" stroke-width="2"/><path d="M7.100 6.800v6.600M13 6.800v6.600" fill="none" stroke="currentColor" stroke-width="1.700"/></svg>
<svg class="b" style="left:1525.4px;top:581.2px;color:#9a9a9a;" width="9" height="6" viewBox="0 0 9 6"><path d="M.5 1l4 3.800 4-3.800" fill="none" stroke="currentColor" stroke-width="1.400"/></svg>
<svg class="b" style="left:1547px;top:574px;color:#222;" width="20" height="20" viewBox="0 0 20 20"><path d="M5 3.800a.8.800 0 0 1 .8-.8h8.500a.8.800 0 0 1 .8.800v13.800l-5-3.700-5.100 3.700z" fill="none" stroke="currentColor" stroke-width="1.700" stroke-linejoin="round"/></svg>
<svg class="b" style="left:1581.6px;top:574px;color:#9a9a9a;" width="20" height="20" viewBox="0 0 20 20"><path d="M.8 1.600h17.400v5.700M.8 1.600v17h5M.8 7.300h17.400M.8 13h5M6.600 1.600v5.700M12.400 1.600v5.700" fill="none" stroke="currentColor" stroke-width="1" opacity=".55"/><rect x="6.700" y="8.200" width="11.500" height="10.400" fill="none" stroke="currentColor" stroke-width="2"/></svg>
<svg class="b" style="left:1609px;top:581.2px;color:#9a9a9a;" width="9" height="6" viewBox="0 0 9 6"><path d="M.5 1l4 3.800 4-3.800" fill="none" stroke="currentColor" stroke-width="1.400"/></svg>
<svg class="b" style="left:1631.5px;top:574px;color:#9a9a9a;" width="20" height="20" viewBox="0 0 20 20"><path d="M11 18h-8.500a1.300 1.300 0 0 1-1.300-1.300v-13.400a1.300 1.300 0 0 1 1.300-1.300h13.600a1.300 1.300 0 0 1 1.300 1.300v8" fill="none" stroke="currentColor" stroke-width="1.800"/><path d="M1.500 7.500h16M1.500 13h10M6.700 2v16M12.300 2v9.500" fill="none" stroke="currentColor" stroke-width="1" opacity=".75"/><path d="M15.200 11.300l1.300 2.700 3 .4-2.200 2.100.5 3-2.600-1.400-2.600 1.400.5-3-2.200-2.100 3-.4z" fill="currentColor"/></svg>
<svg class="b" style="left:1666px;top:574px;color:#222;" width="20" height="20" viewBox="0 0 20 20"><path d="M14.300 8v-5a1 1 0 0 0-1-1h-10.500a1 1 0 0 0-1 1v13.200a1 1 0 0 0 1 1h6.500" fill="none" stroke="currentColor" stroke-width="1.600"/><path d="M4.800 6.300h6.300M4.800 9.400h6.300M4.800 12.300h4" fill="none" stroke="currentColor" stroke-width="1.400"/><path d="M10.200 19.700l.7-3.300 6-6.900 2.400 2.200-6 6.900z" fill="currentColor"/></svg>
<svg class="b" style="left:1693px;top:581.2px;color:#222;" width="9" height="6" viewBox="0 0 9 6"><path d="M.5 1l4 3.800 4-3.800" fill="none" stroke="currentColor" stroke-width="1.400"/></svg>
<svg class="b" style="left:1715px;top:574px;color:#9a9a9a;" width="20" height="20" viewBox="0 0 20 20"><path d="M.8 1.500h18v10M.8 1.500v17.200h10.500M.8 7.300h18M.8 13h10M6.700 1.500v17.200M12.700 1.500v10" fill="none" stroke="currentColor" stroke-width="1" opacity=".55"/><rect x="6.700" y="7" width="6.500" height="6.300" rx="1" fill="none" stroke="currentColor" stroke-width="2"/><path d="M15.200 11.300l1.300 2.700 3 .4-2.200 2.100.5 3-2.600-1.400-2.600 1.400.5-3-2.200-2.100 3-.4z" fill="currentColor"/></svg>
<svg class="b" style="left:1749px;top:574px;color:#222;" width="20" height="20" viewBox="0 0 20 20"><path d="M.8 4.500v-2.200a1.500 1.500 0 0 1 1.500-1.500h2.500M15.200.8h2.500a1.500 1.500 0 0 1 1.500 1.500v2.200M19.200 15.500v2.200a1.500 1.500 0 0 1-1.500 1.500h-2.500M4.800 19.200h-2.500a1.500 1.500 0 0 1-1.500-1.500v-2.200" fill="none" stroke="currentColor" stroke-width="1.500"/><path d="M7.500.8h1.500M11 .8h1.500M7.500 19.200h1.500M11 19.200h1.500M.8 7.500v1.500M.8 11v1.500M19.200 7.500v1.500M19.200 11v1.500" fill="none" stroke="currentColor" stroke-width="1.500"/><path d="M4.200 5.700h7.600M12.700 5.700h3.300M4.200 9.800h11.800M4.200 13.800h9.300" fill="none" stroke="currentColor" stroke-width="1.400"/></svg>
<svg class="b" style="left:1783px;top:574px;color:#222;" width="20" height="20" viewBox="0 0 20 20"><path d="M.9 14v-12.200a1 1 0 0 1 1-1h16.200a1 1 0 0 1 1 1v1" fill="none" stroke="currentColor" stroke-width="1.500"/><path d="M.9 16v1.200M19.100 5v14.200M19.100 19.200h-18.200" fill="none" stroke="currentColor" stroke-width="1.500" stroke-dasharray="1.200 1.300"/><g transform="translate(4.700 13.800) scale(.8 1)"><text x="0" y="0" font-size="10.200" font-weight="700" style="font-family:'Liberation Sans',sans-serif" fill="currentColor">H1</text></g></svg>
<svg class="b" style="left:1817px;top:574px;color:#222;" width="20" height="20" viewBox="0 0 20 20"><path d="M2 9.800h16" fill="none" stroke="currentColor" stroke-width="1.800"/></svg>
<span class="t" style="left:1391.30px;top:577.30px;font-size:13.00px;color:#262626;">Source</span>
<svg class="b" style="left:592px;top:612px;color:#222;" width="20" height="20" viewBox="0 0 20 20"><path d="M14 6.500c-.5-1.900-2-2.900-4.300-2.900-2.400 0-4 1.200-4 3 0 .9.400 1.600 1 2.100M5.200 13.500c.5 2.100 2.100 3.300 4.600 3.300 2.600 0 4.300-1.300 4.300-3.200 0-.9-.3-1.600-.9-2.100" fill="none" stroke="currentColor" stroke-width="1.400"/><path d="M3 9.400h14" fill="none" stroke="currentColor" stroke-width="1.300"/></svg>
<svg class="b" style="left:626px;top:612px;color:#222;" width="20" height="20" viewBox="0 0 20 20"><path d="M1.700 6.300l10.300 10.400M12 6.300l-10.300 10.400" fill="none" stroke="currentColor" stroke-width="1.500"/><text x="13" y="19" font-size="9.200" style="font-family:'Liberation Sans',sans-serif" fill="currentColor">2</text></svg>
<svg class="b" style="left:659.6px;top:612px;color:#222;" width="20" height="20" viewBox="0 0 20 20"><path d="M1.400 6.300l10 10.400M11.400 6.300l-10 10.400" fill="none" stroke="currentColor" stroke-width="1.500"/><text x="12.800" y="7.800" font-size="9.200" style="font-family:'Liberation Sans',sans-serif" fill="currentColor">2</text></svg>
<svg class="b" style="left:693px;top:612px;color:#222;" width="20" height="20" viewBox="0 0 20 20"><path d="M3.800 2.800c-3.300 4.700-3.300 9.500 0 14.200M16 2.800c3.300 4.700 3.300 9.500 0 14.200" fill="none" stroke="currentColor" stroke-width="1.200"/><path d="M5.900 9.800h8" fill="none" stroke="currentColor" stroke-width="2"/></svg>
<svg class="b" style="left:727.5px;top:612px;color:#222;" width="20" height="20" viewBox="0 0 20 20"><path d="M2.300 15.800v-5.300c0-3.500 1.900-5.700 5.400-6.500l.6 1.400c-2 .7-2.900 1.800-2.900 3.600h3.600v6.800zM10.200 15.800v-5.300c0-3.500 1.900-5.700 5.400-6.500l.6 1.400c-2 .7-2.900 1.800-2.900 3.600h3.600v6.800z" fill="currentColor"/></svg>
<svg class="b" style="left:760.4px;top:612px;color:#222;" width="20" height="20" viewBox="0 0 20 20"><path d="M2.700 3.800h15.800M8 9.700h10.500M2.700 15.800h15.800" fill="none" stroke="currentColor" stroke-width="1.500"/><path d="M1.400 7l4.200 2.700-4.200 2.700z" fill="currentColor"/></svg>
<svg class="b" style="left:794.6px;top:612px;color:#9a9a9a;" width="20" height="20" viewBox="0 0 20 20"><path d="M2.700 3.800h15.800M8 9.700h10.500M2.700 15.800h15.800" fill="none" stroke="currentColor" stroke-width="1.500"/><path d="M5.400 7l-4.200 2.700 4.200 2.700z" fill="currentColor"/></svg>
<svg class="b" style="left:827.5px;top:612px;color:#222;" width="20" height="20" viewBox="0 0 20 20"><path d="M2.700 3.800h15.400M2.700 7.700h10.800M2.700 11.700h15.400M2.700 15.800h10.800" fill="none" stroke="currentColor" stroke-width="1.500"/></svg>
<svg class="b" style="left:854.6px;top:619.2px;color:#222;" width="9" height="6" viewBox="0 0 9 6"><path d="M.5 1l4 3.800 4-3.800" fill="none" stroke="currentColor" stroke-width="1.400"/></svg>
<svg class="b" style="left:876.7px;top:612px;color:#222;" width="20" height="20" viewBox="0 0 20 20"><path d="M2.300 16.200h5.400v-1.800c-2.300-1.100-3.600-3-3.600-5.500 0-3.400 2.500-5.700 6.200-5.700s6.200 2.300 6.200 5.700c0 2.500-1.300 4.400-3.600 5.500v1.800h5.400" fill="none" stroke="currentColor" stroke-width="1.600"/></svg>
<svg class="b" style="left:1183px;top:612px;color:#222;" width="20" height="20" viewBox="0 0 20 20"><path d="M.6 16.800l5.700-13.600h1l5.700 13.600M2.700 12h8.200" fill="none" stroke="currentColor" stroke-width="1.500"/><path d="M10.200 3.600h7M11 5.700h6.200M11.800 7.700h5.400M12.600 9.700h4.600" fill="none" stroke="currentColor" stroke-width="1"/></svg>
<svg class="b" style="left:1208px;top:619.2px;color:#222;" width="9" height="6" viewBox="0 0 9 6"><path d="M.5 1l4 3.800 4-3.800" fill="none" stroke="currentColor" stroke-width="1.400"/></svg>
<svg class="b" style="left:1230px;top:612px;color:#222;" width="20" height="20" viewBox="0 0 20 20"><rect x="2" y="1.900" width="15.800" height="16.100" rx="2" fill="currentColor"/><path d="M4.900 16l4.700-12.300h.8l4.700 12.300M6.500 11.900h7" fill="none" stroke="#fff" stroke-width="1.400"/></svg>
<svg class="b" style="left:1257px;top:619.2px;color:#222;" width="9" height="6" viewBox="0 0 9 6"><path d="M.5 1l4 3.800 4-3.800" fill="none" stroke="currentColor" stroke-width="1.400"/></svg>
<svg class="b" style="left:1279px;top:612px;color:#9a9a9a;" width="20" height="20" viewBox="0 0 20 20"><text x="-0.500" y="16" font-size="16" style="font-family:'Liberation Sans',sans-serif" fill="currentColor">A</text><text x="10.300" y="16" font-size="14" style="font-family:'Liberation Sans',sans-serif" fill="currentColor">a</text></svg>
<svg class="b" style="left:1305px;top:619.2px;color:#9a9a9a;" width="9" height="6" viewBox="0 0 9 6"><path d="M.5 1l4 3.800 4-3.800" fill="none" stroke="currentColor" stroke-width="1.400"/></svg>
<svg class="b" style="left:1327px;top:612px;color:#222;" width="20" height="20" viewBox="0 0 20 20"><path d="M4.500 14l5-12h1l5 12M6.500 9.800h7" fill="none" stroke="currentColor" stroke-width="1.500"/><path d="M2.500 17.800h15" fill="none" stroke="currentColor" stroke-width="1.700"/></svg>
<svg class="b" style="left:1354px;top:619.2px;color:#222;" width="9" height="6" viewBox="0 0 9 6"><path d="M.5 1l4 3.800 4-3.800" fill="none" stroke="currentColor" stroke-width="1.400"/></svg>
<svg class="b" style="left:1376px;top:612px;color:#222;" width="20" height="20" viewBox="0 0 20 20"><path d="M0.500 17l5.500-14h1l5.500 14M2.700 12h7.500" fill="none" stroke="currentColor" stroke-width="1.500"/><path d="M16.500 4v12" fill="none" stroke="currentColor" stroke-width="1.500"/><path d="M16.500 1.500l2.500 3.500h-5zM16.500 18.500l2.500-3.500h-5z" fill="currentColor"/></svg>
<svg class="b" style="left:1403px;top:619.2px;color:#222;" width="9" height="6" viewBox="0 0 9 6"><path d="M.5 1l4 3.800 4-3.800" fill="none" stroke="currentColor" stroke-width="1.400"/></svg>
<svg class="b" style="left:1554px;top:612px;color:#222;" width="20" height="20" viewBox="0 0 20 20"><path d="M10.700 1l4.400 2.700-5.400 10.300-2.200 2.200-3.700 1.100-2.400 1.400 1.100-2.200-.2-3.500 1.900-2.200z" fill="currentColor"/><path d="M8.900 17.800h10" fill="none" stroke="currentColor" stroke-width="1.300"/></svg>
<svg class="b" style="left:1582px;top:619.2px;color:#222;" width="9" height="6" viewBox="0 0 9 6"><path d="M.5 1l4 3.800 4-3.800" fill="none" stroke="currentColor" stroke-width="1.400"/></svg>
<svg class="b" style="left:1604px;top:612px;color:#222;" width="20" height="20" viewBox="0 0 20 20"><path d="M10.700 1l4.400 2.700-5.400 10.300-2.200 2.200-3.700 1.100-2.400 1.400 1.100-2.200-.2-3.500 1.900-2.200z" fill="currentColor"/><path d="M10.900 2.600l2.700 1.600-4.300 8.300-3.100-1.700z" fill="#5fe35f"/><path d="M8.900 17.800h10" fill="none" stroke="currentColor" stroke-width="1.300"/></svg>
<svg class="b" style="left:1638px;top:612px;color:#222;" width="20" height="20" viewBox="0 0 20 20"><rect x="1" y=".9" width="18.100" height="18.100" rx="2" fill="none" stroke="currentColor" stroke-width="1.600"/><path d="M6 14l8-8" fill="none" stroke="currentColor" stroke-width="1.500"/><path d="M11 4.400h4.700v4.700zM9 15.600h-4.700v-4.700z" fill="currentColor"/></svg>
<svg class="b" style="left:1672px;top:612px;color:#222;" width="20" height="20" viewBox="0 0 20 20"><path d="M10.700 1l4.400 2.700-5.400 10.300-2.200 2.200-3.700 1.100-2.400 1.400 1.100-2.200-.2-3.500 1.900-2.200z" fill="currentColor"/><path d="M8.900 17.800h10" fill="none" stroke="currentColor" stroke-width="1.300"/></svg>
<svg class="b" style="left:1700px;top:619.2px;color:#222;" width="9" height="6" viewBox="0 0 9 6"><path d="M.5 1l4 3.800 4-3.800" fill="none" stroke="currentColor" stroke-width="1.400"/></svg>
<svg class="b" style="left:1722px;top:612px;color:#222;" width="20" height="20" viewBox="0 0 20 20"><path d="M3 10v-7a1.500 1.500 0 0 1 1.500-1.500h11a1.500 1.500 0 0 1 1.500 1.500v7M3 16v1a1.500 1.500 0 0 0 1.500 1.500h11a1.500 1.500 0 0 0 1.500-1.500v-1" fill="none" stroke="currentColor" stroke-width="1.300"/><path d="M5.500 4.500h9M5.500 7h6" fill="none" stroke="currentColor" stroke-width="1.200"/><rect x="0.500" y="9.500" width="19" height="7" rx="1.500" fill="currentColor"/><text x="1.500" y="15.300" font-size="6.500" font-weight="700" fill="#fff" style="font-family:'Liberation Sans',sans-serif">HTML</text></svg>
<svg class="b" style="left:1756px;top:612px;color:#222;" width="20" height="20" viewBox="0 0 20 20"><rect x="2" y="3.500" width="16" height="13" rx="1" fill="none" stroke="currentColor" stroke-width="1.500"/><path d="M3 15.500l4.500-5.500 3 3.500 2-2 4.500 4z" fill="currentColor"/><circle cx="14" cy="7.300" r="1.500" fill="currentColor"/></svg>
<svg class="b" style="left:1790px;top:612px;color:#222;" width="20" height="20" viewBox="0 0 20 20"><path d="M1.500 3h10.500v3.800h-1.100l-.600-2.300h-2.500v10.700l1.900.500v1.100h-5.900v-1.100l1.900-.500v-10.700h-2.500l-.600 2.300h-1.100z" fill="currentColor"/><path d="M16.300 4v12" fill="none" stroke="currentColor" stroke-width="1.500"/><path d="M16.300 1.500l2.500 3.500h-5zM16.300 18.500l2.500-3.500h-5z" fill="currentColor"/></svg>
<svg class="b" style="left:1816px;top:619.2px;color:#222;" width="9" height="6" viewBox="0 0 9 6"><path d="M.5 1l4 3.800 4-3.800" fill="none" stroke="currentColor" stroke-width="1.400"/></svg>
<span class="t" style="left:914.70px;top:615.00px;font-size:13.00px;color:#262626;">Styles</span>
<svg class="b" style="left:1012px;top:619.2px;color:#222;" width="9" height="6" viewBox="0 0 9 6"><path d="M.5 1l4 3.800 4-3.800" fill="none" stroke="currentColor" stroke-width="1.400"/></svg>
<span class="t" style="left:1043.70px;top:615.00px;font-size:13.00px;color:#262626;">Heading 2</span>
<svg class="b" style="left:1153.5px;top:619.2px;color:#222;" width="9" height="6" viewBox="0 0 9 6"><path d="M.5 1l4 3.800 4-3.800" fill="none" stroke="currentColor" stroke-width="1.400"/></svg>
<span class="t" style="left:1428.70px;top:615.00px;font-size:13.00px;color:#262626;">Choose lang...</span>
<svg class="b" style="left:1526px;top:619.2px;color:#222;" width="9" height="6" viewBox="0 0 9 6"><path d="M.5 1l4 3.800 4-3.800" fill="none" stroke="currentColor" stroke-width="1.400"/></svg>
<svg class="b" style="left:592px;top:650px;color:#222;" width="20" height="20" viewBox="0 0 20 20"><rect x="1.300" y="2.600" width="17.400" height="13.800" fill="none" stroke="currentColor" stroke-width="1.600"/><path d="M3.600 2.600v13.800M16.400 2.600v13.800" fill="none" stroke="currentColor" stroke-width="1"/><path d="M7.500 6.700l5.500 2.900-5.500 2.900z" fill="currentColor"/><path d="M2.400 4v11M17.600 4v11" fill="none" stroke="currentColor" stroke-width="1" stroke-dasharray=".8 1.200"/></svg>
<svg class="b" style="left:626px;top:650px;color:#222;" width="20" height="20" viewBox="0 0 20 20"><path d="M7.800 5.800l-5.300 4.400 5.300 4.400M12.200 5.800l5.300 4.400-5.300 4.400" fill="none" stroke="currentColor" stroke-width="1.500"/></svg>
<svg class="b" style="left:659px;top:650px;color:#222;" width="20" height="20" viewBox="0 0 20 20"><path d="M4.300 1v3.600h14.500v-3.600M4.300 18.800v-3.600h14.500v3.600" fill="none" stroke="currentColor" stroke-width="1.500"/><path d="M3.800 9.800h4M9.300 9.800h4M14.800 9.800h4.200" fill="none" stroke="currentColor" stroke-width="1.700"/><path d="M0 7.800l2.600 2-2.600 2z" fill="currentColor"/></svg>
<svg class="b" style="left:693px;top:650px;color:#222;" width="20" height="20" viewBox="0 0 20 20"><circle cx="9.900" cy="10" r="9.100" fill="none" stroke="currentColor" stroke-width="1.500"/><circle cx="6.400" cy="7" r="1.200" fill="currentColor"/><circle cx="13.400" cy="7" r="1.200" fill="currentColor"/><path d="M4.700 11.700c1.100 2.100 2.900 3.100 5.200 3.100s4.100-1 5.200-3.100" fill="none" stroke="currentColor" stroke-width="1.500"/></svg>
<svg class="b" style="left:720px;top:657.2px;color:#222;" width="9" height="6" viewBox="0 0 9 6"><path d="M.5 1l4 3.800 4-3.800" fill="none" stroke="currentColor" stroke-width="1.400"/></svg>
<svg class="b" style="left:741.7px;top:650px;color:#222;" width="20" height="20" viewBox="0 0 20 20"><path d="M6 18.300h-3.500a1.300 1.300 0 0 1-1.300-1.300v-14.700a1.300 1.300 0 0 1 1.300-1.300h13.400a1.300 1.300 0 0 1 1.300 1.300v9.200" fill="none" stroke="currentColor" stroke-width="1.500"/><path d="M3.500 4h6M5 6.200h8M6.500 8.400h7M8 10.600h5.500M3.500 12.800h3M3.500 15h2" fill="none" stroke="currentColor" stroke-width="1"/><path d="M11.800 13.300l-3 3 3 3M16.200 13.300l3 3-3 3" fill="none" stroke="currentColor" stroke-width="1.500"/></svg>
<svg class="b" style="left:770px;top:657.2px;color:#222;" width="9" height="6" viewBox="0 0 9 6"><path d="M.5 1l4 3.800 4-3.800" fill="none" stroke="currentColor" stroke-width="1.400"/></svg>
<svg class="b" style="left:792px;top:650px;color:#222;" width="20" height="20" viewBox="0 0 20 20"><path d="M7 3c-2 0-2.500 1-2.500 2.500v2.500c0 1.200-.7 2-2 2 1.300 0 2 .8 2 2v2.500c0 1.500.5 2.500 2.500 2.500M13 3c2 0 2.500 1 2.500 2.500v2.500c0 1.200.7 2 2 2-1.300 0-2 .8-2 2v2.500c0 1.500-.5 2.500-2.500 2.500" fill="none" stroke="currentColor" stroke-width="1.400"/><circle cx="10" cy="10" r="1.400" fill="currentColor"/></svg>
<svg class="b" style="left:819px;top:657.2px;color:#222;" width="9" height="6" viewBox="0 0 9 6"><path d="M.5 1l4 3.800 4-3.800" fill="none" stroke="currentColor" stroke-width="1.400"/></svg>
<svg class="b" style="left:841px;top:650px;color:#222;" width="20" height="20" viewBox="0 0 20 20"><path d="M6 1.500c-2 0-2.500 1-2.500 2.500v2c0 1.200-.7 2-2 2 1.300 0 2 .8 2 2v2c0 1.500.5 2.500 2.500 2.500M12 1.500c2 0 2.500 1 2.500 2.500v2c0 1.200.7 2 2 2-1.300 0-2 .8-2 2" fill="none" stroke="currentColor" stroke-width="1.400"/><circle cx="9" cy="8" r="1.300" fill="currentColor"/><path d="M7.500 16.500c1.500-2.200 3.300-3.200 5.500-3.200s4 1 5.500 3.200c-1.500 1.500-3.300 2.300-5.500 2.300s-4-.8-5.500-2.300z" fill="currentColor"/><circle cx="13" cy="16" r="1.200" fill="#fff"/></svg>
<svg class="b" style="left:867px;top:657.2px;color:#222;" width="9" height="6" viewBox="0 0 9 6"><path d="M.5 1l4 3.800 4-3.800" fill="none" stroke="currentColor" stroke-width="1.400"/></svg>
<svg class="b" style="left:889px;top:650px;color:#222;" width="20" height="20" viewBox="0 0 20 20"><rect x="2" y="2" width="14" height="4.500" rx="1" fill="currentColor"/><path d="M16 4.200h2v5.300h-8v3" fill="none" stroke="currentColor" stroke-width="1.500"/><rect x="8.300" y="11.500" width="3.400" height="7" rx="1" fill="currentColor"/></svg>
<svg class="b" style="left:918px;top:657.2px;color:#222;" width="9" height="6" viewBox="0 0 9 6"><path d="M.5 1l4 3.800 4-3.800" fill="none" stroke="currentColor" stroke-width="1.400"/></svg>
<svg class="b" style="left:940px;top:650px;color:#222;" width="20" height="20" viewBox="0 0 20 20"><path d="M17.700 10.500v-8a1.300 1.300 0 0 0-1.300-1.300h-13.400a1.300 1.300 0 0 0-1.300 1.300v14a1.300 1.300 0 0 0 1.300 1.300h8.500" fill="none" stroke="currentColor" stroke-width="1.500"/><path d="M4.500 4.500h9M6 6.800h8.500M7.500 9h6M4.500 11.300h6M6 13.600h4M4.500 15.700h3" fill="none" stroke="currentColor" stroke-width="1"/><circle cx="16" cy="16.200" r="4" fill="currentColor"/><path d="M16 13.900v4.600M13.700 16.200h4.600" stroke="#fff" stroke-width="1.300"/></svg>
<svg class="b" style="left:974.5px;top:650px;color:#222;" width="20" height="20" viewBox="0 0 20 20"><rect x="1.300" y="1.400" width="6.600" height="16.700" rx="1.200" fill="none" stroke="currentColor" stroke-width="1.600"/><rect x="11.300" y="1.400" width="7.400" height="6" rx="1.200" fill="none" stroke="currentColor" stroke-width="1.600"/><rect x="11.300" y="11" width="7.400" height="7.100" rx="1.200" fill="none" stroke="currentColor" stroke-width="1.600"/></svg>
<svg class="b" style="left:1000px;top:657.2px;color:#222;" width="9" height="6" viewBox="0 0 9 6"><path d="M.5 1l4 3.800 4-3.800" fill="none" stroke="currentColor" stroke-width="1.400"/></svg>
<div class="b" style="left:1908px;top:205.5px;width:9px;height:155.5px;background:#595959;border-radius:5px"></div>
<svg class="b" style="left:1908px;top:145px;" width="9" height="5" viewBox="0 0 9 5"><path d="M0 5l4.500-5 4.500 5z" fill="#b9b9b9"/></svg>
<svg class="b" style="left:1908px;top:918px;" width="9" height="5" viewBox="0 0 9 5"><path d="M0 0l4.500 5 4.500-5z" fill="#b9b9b9"/></svg>
</body></html>
